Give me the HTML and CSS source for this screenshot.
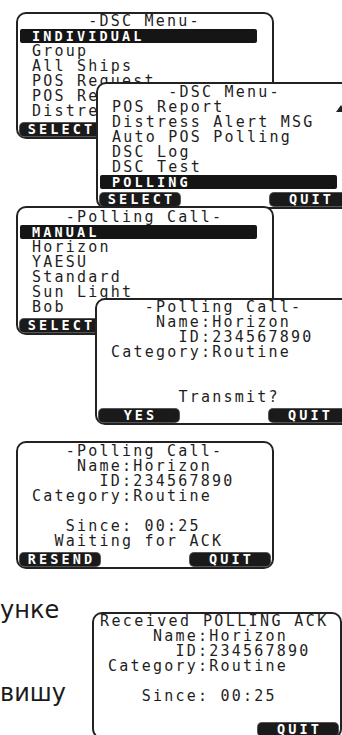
FILE: index.html
```html
<!DOCTYPE html>
<html lang="ru">
<head>
    <meta charset="UTF-8">
    <meta name="viewport" content="width=device-width, initial-scale=1.0">
    <title>DSC Polling</title>
    <link rel="stylesheet" href="styles.css">
</head>
<body>
<div class="page">

    <div class="screen s1">
        <div class="row">     -DSC Menu-</div>
        <div class="row sel">INDIVIDUAL</div>
        <div class="row">Group</div>
        <div class="row">All Ships</div>
        <div class="row">POS Request</div>
        <div class="row">POS Report</div>
        <div class="row">Distress Alert MSG</div>
        <div class="keys"><span class="key">SELECT</span><span class="key">QUIT</span></div>
    </div>

    <div class="screen s2">
        <span class="arrow"></span>
        <div class="row">     -DSC Menu-</div>
        <div class="row">POS Report</div>
        <div class="row">Distress Alert MSG</div>
        <div class="row">Auto POS Polling</div>
        <div class="row">DSC Log</div>
        <div class="row">DSC Test</div>
        <div class="row sel">POLLING</div>
        <div class="keys"><span class="key">SELECT</span><span class="key">QUIT</span></div>
    </div>

    <div class="screen s3">
        <div class="row">   -Polling Call-</div>
        <div class="row sel">MANUAL</div>
        <div class="row">Horizon</div>
        <div class="row">YAESU</div>
        <div class="row">Standard</div>
        <div class="row">Sun Light</div>
        <div class="row">Bob</div>
        <div class="keys"><span class="key">SELECT</span><span class="key">QUIT</span></div>
    </div>

    <div class="screen s4">
        <div class="row">   -Polling Call-</div>
        <div class="row">    Name:Horizon</div>
        <div class="row">      ID:234567890</div>
        <div class="row">Category:Routine</div>
        <div class="row"> </div>
        <div class="row"> </div>
        <div class="row">      Transmit?</div>
        <div class="keys"><span class="key">YES</span><span class="key">QUIT</span></div>
    </div>

    <div class="screen s5">
        <div class="row">   -Polling Call-</div>
        <div class="row">    Name:Horizon</div>
        <div class="row">      ID:234567890</div>
        <div class="row">Category:Routine</div>
        <div class="row"> </div>
        <div class="row">   Since: 00:25</div>
        <div class="row">  Waiting for ACK</div>
        <div class="keys"><span class="key">RESEND</span><span class="key">QUIT</span></div>
    </div>

    <div class="figure">
        <div class="side">
            <p>унке</p>
            <p class="next">вишу</p>
        </div>
        <div class="screen s6">
            <div class="row wide">Received POLLING ACK</div>
            <div class="row">    Name:Horizon</div>
            <div class="row">      ID:234567890</div>
            <div class="row">Category:Routine</div>
            <div class="row"> </div>
            <div class="row">   Since: 00:25</div>
            <div class="row"> </div>
            <div class="keys keys-right"><span class="key">QUIT</span></div>
        </div>
    </div>

</div>
</body>
</html>
```

FILE: styles.css
```css
body {
    margin: 0;
    background-color: #ffffff;
}
.page {
    width: 342px;
    height: 735px;
    overflow: hidden;
    padding-top: 12px;
    box-sizing: border-box;
}

/* one LCD screen */
.screen {
    position: relative;
    width: 258px;
    box-sizing: border-box;
    border: 2px solid #222222;
    border-radius: 10px;
    background-color: #ffffff;
    font-family: "DejaVu Sans Mono", monospace;
    color: #1e1e1e;
}
.s1 {
    margin-left: 16px;
}
.s2 {
    margin: -57px 0 0 96px;
    padding-top: 1px;
}
.s3 {
    margin: -3px 0 0 16px;
    padding-top: 2px;
}
.s4 {
    margin: -37px 0 0 95px;
}
.s5 {
    margin: 16px 0 0 16px;
    padding-top: 1px;
}

/* text rows, 11.25px per character */
.row {
    height: 15px;
    line-height: 15px;
    padding-left: 14px;
    font-size: 15px;
    letter-spacing: 2.22px;
    white-space: pre;
}
.row.sel {
    width: 237px;
    height: 14px;
    line-height: 14px;
    margin: 0 0 1px 2px;
    padding-left: 12px;
    box-sizing: border-box;
    background-color: #151515;
    color: #ffffff;
    font-size: 13.5px;
    font-weight: bold;
    letter-spacing: 3.12px;
    border-radius: 2px;
}
.row.wide {
    margin-left: -8px;
    letter-spacing: 2.4px;
}

.arrow {
    position: absolute;
    left: 238px;
    top: 21px;
    width: 0;
    height: 0;
    border-left: 5px solid transparent;
    border-right: 5px solid transparent;
    border-bottom: 7px solid #222222;
}

/* soft keys */
.keys {
    display: flex;
    justify-content: space-between;
    padding: 0 2px 1px 2px;
    margin-top: 4px;
}
.keys-right {
    justify-content: flex-end;
}
.key {
    width: 80px;
    height: 13px;
    line-height: 13px;
    box-sizing: border-box;
    padding-left: 3px;
    background-color: #1a1a1a;
    color: #ffffff;
    border-radius: 4px;
    box-shadow: 0 0 0 1px #555555;
    text-align: center;
    font-size: 13.5px;
    font-weight: bold;
    letter-spacing: 3.12px;
}

/* last screen with the cut-off page text */
.figure {
    display: flex;
    align-items: flex-start;
    margin-top: 27px;
}
.side {
    flex: none;
    width: 92px;
    font-family: "DejaVu Sans", sans-serif;
    font-size: 24px;
    color: #1a1a1a;
}
.side p {
    margin: 0;
    line-height: 28px;
}
.side .next {
    margin-top: 55px;
}
.s6 {
    margin-top: 16px;
}
```
